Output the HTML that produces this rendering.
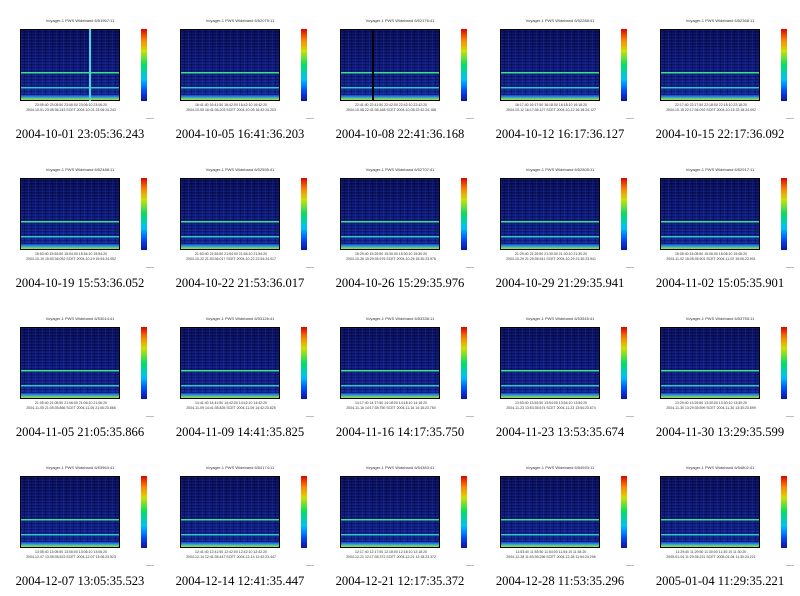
<!DOCTYPE html>
<html><head><meta charset="utf-8"><style>
body{margin:0;width:800px;height:596px;background:#fff;position:relative;overflow:hidden;font-family:"Liberation Sans",sans-serif}
.c{position:absolute;width:160px;height:149px}
.t{position:absolute;left:20px;top:18px;width:120px;font-size:4px;color:#333;text-align:center;white-space:nowrap}
.p{position:absolute;left:20px;top:29px;width:100px;height:72px;border:0.5px solid #000;box-sizing:border-box;
background:
linear-gradient(to bottom,transparent 0,transparent 42px,#3fe08a 42px,#3fe08a 43.5px,transparent 43.5px,transparent 57px,#30c8c8 57px,#30c8c8 58.5px,transparent 58.5px,transparent 65px,#1a3fd0 65px,#3090e0 67px,#50d080 68.5px,#c0d030 70px,#e09020 72px),
repeating-linear-gradient(90deg,rgba(40,80,220,.18) 0 1px,transparent 1px 3px,rgba(0,0,40,.3) 3px 4px,transparent 4px 7px),
repeating-linear-gradient(0deg,rgba(40,80,220,.15) 0 1px,transparent 1px 2px,rgba(0,0,40,.3) 2px 3px),
linear-gradient(#0a0f58,#101c80 60%,#142a9a)}
.cb{position:absolute;left:141px;top:29px;width:6px;height:72px;background:linear-gradient(to top,#1010a0,#0050ff 15%,#00c0ff 30%,#00e060 50%,#d0e000 70%,#ff8000 85%,#e00000)}
.x{position:absolute;left:16px;top:103px;width:110px;font-size:3.5px;color:#333;text-align:center;line-height:5px}
.cap{position:absolute;left:0;top:127px;width:160px;text-align:center;font-family:"Liberation Serif",serif;font-size:12.6px;color:#000;white-space:nowrap}
.m{position:absolute;left:146px;top:118px;width:8px;height:1px;background:#bbb}
</style></head><body>
<div class="c" style="left:0;top:0"><div class="t">Voyager-1 PWS Wideband 6/51967:11</div><div class="p"></div><div class="cb"></div><div class="x">23:05:40 23:05:50 23:06:00 23:06:10 23:06:20<br>2004-10-01 23:05:36.243 SCET 2004-10-01 23:06:24.243</div><div class="m"></div><div class="cap">2004-10-01 23:05:36.243</div><div style="position:absolute;left:89px;top:29px;width:2px;height:72px;background:#50d0e0"></div></div>
<div class="c" style="left:160px;top:0"><div class="t">Voyager-1 PWS Wideband 6/52079:11</div><div class="p"></div><div class="cb"></div><div class="x">16:41:40 16:41:50 16:42:00 16:42:10 16:42:20<br>2004-10-05 16:41:36.203 SCET 2004-10-05 16:42:24.203</div><div class="m"></div><div class="cap">2004-10-05 16:41:36.203</div></div>
<div class="c" style="left:320px;top:0"><div class="t">Voyager-1 PWS Wideband 6/52176:41</div><div class="p"></div><div class="cb"></div><div class="x">22:41:40 22:41:50 22:42:00 22:42:10 22:42:20<br>2004-10-08 22:41:36.168 SCET 2004-10-08 22:42:24.168</div><div class="m"></div><div class="cap">2004-10-08 22:41:36.168</div><div style="position:absolute;left:52px;top:29px;width:2px;height:72px;background:#000"></div></div>
<div class="c" style="left:480px;top:0"><div class="t">Voyager-1 PWS Wideband 6/52288:41</div><div class="p"></div><div class="cb"></div><div class="x">16:17:40 16:17:50 16:18:00 16:18:10 16:18:20<br>2004-10-12 16:17:36.127 SCET 2004-10-12 16:18:24.127</div><div class="m"></div><div class="cap">2004-10-12 16:17:36.127</div></div>
<div class="c" style="left:640px;top:0"><div class="t">Voyager-1 PWS Wideband 6/52368:11</div><div class="p"></div><div class="cb"></div><div class="x">22:17:40 22:17:50 22:18:00 22:18:10 22:18:20<br>2004-10-15 22:17:36.092 SCET 2004-10-15 22:18:24.092</div><div class="m"></div><div class="cap">2004-10-15 22:17:36.092</div></div>

<div class="c" style="left:0;top:149px"><div class="t">Voyager-1 PWS Wideband 6/52488:11</div><div class="p"></div><div class="cb"></div><div class="x">15:53:40 15:53:50 15:54:00 15:54:10 15:54:20<br>2004-10-19 15:53:36.052 SCET 2004-10-19 15:54:24.052</div><div class="m"></div><div class="cap">2004-10-19 15:53:36.052</div></div>
<div class="c" style="left:160px;top:149px"><div class="t">Voyager-1 PWS Wideband 6/52595:41</div><div class="p"></div><div class="cb"></div><div class="x">21:53:40 21:53:50 21:54:00 21:54:10 21:54:20<br>2004-10-22 21:53:36.017 SCET 2004-10-22 21:54:24.017</div><div class="m"></div><div class="cap">2004-10-22 21:53:36.017</div></div>
<div class="c" style="left:320px;top:149px"><div class="t">Voyager-1 PWS Wideband 6/52707:41</div><div class="p"></div><div class="cb"></div><div class="x">15:29:40 15:29:50 15:30:00 15:30:10 15:30:20<br>2004-10-26 15:29:35.976 SCET 2004-10-26 15:30:23.976</div><div class="m"></div><div class="cap">2004-10-26 15:29:35.976</div></div>
<div class="c" style="left:480px;top:149px"><div class="t">Voyager-1 PWS Wideband 6/52805:11</div><div class="p"></div><div class="cb"></div><div class="x">21:29:40 21:29:50 21:30:00 21:30:10 21:30:20<br>2004-10-29 21:29:35.941 SCET 2004-10-29 21:30:23.941</div><div class="m"></div><div class="cap">2004-10-29 21:29:35.941</div></div>
<div class="c" style="left:640px;top:149px"><div class="t">Voyager-1 PWS Wideband 6/52917:11</div><div class="p"></div><div class="cb"></div><div class="x">15:05:40 15:05:50 15:06:00 15:06:10 15:06:20<br>2004-11-02 15:05:35.901 SCET 2004-11-02 15:06:23.901</div><div class="m"></div><div class="cap">2004-11-02 15:05:35.901</div></div>

<div class="c" style="left:0;top:298px"><div class="t">Voyager-1 PWS Wideband 6/53014:41</div><div class="p"></div><div class="cb"></div><div class="x">21:05:40 21:05:50 21:06:00 21:06:10 21:06:20<br>2004-11-05 21:05:35.866 SCET 2004-11-05 21:06:23.866</div><div class="m"></div><div class="cap">2004-11-05 21:05:35.866</div></div>
<div class="c" style="left:160px;top:298px"><div class="t">Voyager-1 PWS Wideband 6/53126:41</div><div class="p"></div><div class="cb"></div><div class="x">14:41:40 14:41:50 14:42:00 14:42:10 14:42:20<br>2004-11-09 14:41:35.825 SCET 2004-11-09 14:42:23.825</div><div class="m"></div><div class="cap">2004-11-09 14:41:35.825</div></div>
<div class="c" style="left:320px;top:298px"><div class="t">Voyager-1 PWS Wideband 6/53336:11</div><div class="p"></div><div class="cb"></div><div class="x">14:17:40 14:17:50 14:18:00 14:18:10 14:18:20<br>2004-11-16 14:17:35.750 SCET 2004-11-16 14:18:23.750</div><div class="m"></div><div class="cap">2004-11-16 14:17:35.750</div></div>
<div class="c" style="left:480px;top:298px"><div class="t">Voyager-1 PWS Wideband 6/53545:41</div><div class="p"></div><div class="cb"></div><div class="x">13:53:40 13:53:50 13:54:00 13:54:10 13:54:20<br>2004-11-23 13:53:35.674 SCET 2004-11-23 13:54:23.674</div><div class="m"></div><div class="cap">2004-11-23 13:53:35.674</div></div>
<div class="c" style="left:640px;top:298px"><div class="t">Voyager-1 PWS Wideband 6/53755:11</div><div class="p"></div><div class="cb"></div><div class="x">13:29:40 13:29:50 13:30:00 13:30:10 13:30:20<br>2004-11-30 13:29:35.599 SCET 2004-11-30 13:30:23.599</div><div class="m"></div><div class="cap">2004-11-30 13:29:35.599</div></div>

<div class="c" style="left:0;top:447px"><div class="t">Voyager-1 PWS Wideband 6/53964:41</div><div class="p"></div><div class="cb"></div><div class="x">13:05:40 13:05:50 13:06:00 13:06:10 13:06:20<br>2004-12-07 13:05:35.523 SCET 2004-12-07 13:06:23.523</div><div class="m"></div><div class="cap">2004-12-07 13:05:35.523</div></div>
<div class="c" style="left:160px;top:447px"><div class="t">Voyager-1 PWS Wideband 6/54174:11</div><div class="p"></div><div class="cb"></div><div class="x">12:41:40 12:41:50 12:42:00 12:42:10 12:42:20<br>2004-12-14 12:41:35.447 SCET 2004-12-14 12:42:23.447</div><div class="m"></div><div class="cap">2004-12-14 12:41:35.447</div></div>
<div class="c" style="left:320px;top:447px"><div class="t">Voyager-1 PWS Wideband 6/54383:41</div><div class="p"></div><div class="cb"></div><div class="x">12:17:40 12:17:50 12:18:00 12:18:10 12:18:20<br>2004-12-21 12:17:35.372 SCET 2004-12-21 12:18:23.372</div><div class="m"></div><div class="cap">2004-12-21 12:17:35.372</div></div>
<div class="c" style="left:480px;top:447px"><div class="t">Voyager-1 PWS Wideband 6/54593:11</div><div class="p"></div><div class="cb"></div><div class="x">11:53:40 11:53:50 11:54:00 11:54:10 11:54:20<br>2004-12-28 11:53:35.296 SCET 2004-12-28 11:54:23.296</div><div class="m"></div><div class="cap">2004-12-28 11:53:35.296</div></div>
<div class="c" style="left:640px;top:447px"><div class="t">Voyager-1 PWS Wideband 6/54802:41</div><div class="p"></div><div class="cb"></div><div class="x">11:29:40 11:29:50 11:30:00 11:30:10 11:30:20<br>2005-01-04 11:29:35.221 SCET 2005-01-04 11:30:23.221</div><div class="m"></div><div class="cap">2005-01-04 11:29:35.221</div></div>
</body></html>
